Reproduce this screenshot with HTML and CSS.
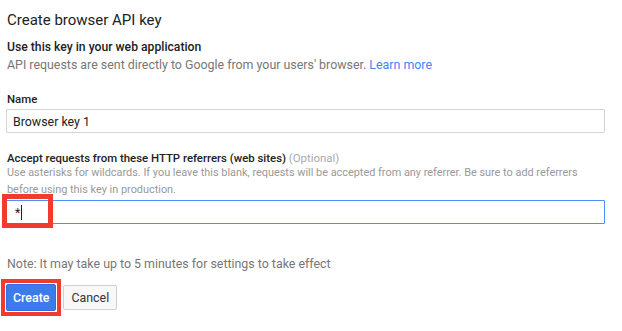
FILE: index.html
```html
<!DOCTYPE html>
<html lang="en">
<head>
    <meta charset="UTF-8">
    <meta name="viewport" content="width=device-width, initial-scale=1.0">
    <title>Create browser API key</title>
    <link rel="stylesheet" href="styles.css">
</head>
<body>
    <div class="dialog">
        <h1 class="dialog-title">Create browser API key</h1>

        <div class="intro">
            <h2 class="intro-title">Use this key in your web application</h2>
            <p class="intro-text">API requests are sent directly to Google from your users' browser. <a href="#" class="link">Learn more</a></p>
        </div>

        <div class="form-group">
            <label for="key-name">Name</label>
            <input type="text" id="key-name" class="field" value="Browser key 1">
        </div>

        <div class="form-group referrers">
            <label for="referrers">Accept requests from these HTTP referrers (web sites) <span class="optional">(Optional)</span></label>
            <p class="help">Use asterisks for wildcards. If you leave this blank, requests will be accepted from any referrer. Be sure to add referrers before using this key in production.</p>
            <div class="field-wrap">
                <div class="field field-focus"><span class="field-value">*</span><span class="caret"></span></div>
                <!-- annotation box over the start of the field -->
                <div class="marker"></div>
            </div>
        </div>

        <p class="note">Note: It may take up to 5 minutes for settings to take effect</p>

        <div class="actions">
            <div class="marked">
                <button class="btn btn-primary">Create</button>
            </div>
            <button class="btn">Cancel</button>
        </div>
    </div>
</body>
</html>
```

FILE: styles.css
```css
* {
    box-sizing: border-box;
}
body {
    margin: 0;
    font-family: Roboto, 'Liberation Sans', Arial, sans-serif;
    background-color: #fff;
    color: #222;
}
.dialog {
    width: 622px;
    padding: 10px 16px 0 7px;
    display: flex;
    flex-direction: column;
}
.dialog-title {
    margin: 0 0 8px;
    font-size: 15px;
    line-height: 20px;
    font-weight: 400;
    color: #222;
}
.intro-title {
    margin: 0;
    font-size: 12.2px;
    line-height: 18px;
    font-weight: 500;
    color: #222;
}
.intro-text {
    margin: 0;
    font-size: 12.4px;
    line-height: 18px;
    color: #777;
}
.link {
    color: #4285f4;
    text-decoration: none;
}
.form-group {
    display: flex;
    flex-direction: column;
    margin-top: 17px;
}
label {
    font-size: 11.4px;
    line-height: 16px;
    font-weight: 500;
    color: #222;
}
.optional {
    font-weight: 400;
    color: #aaa;
}
.field {
    display: flex;
    align-items: center;
    width: 100%;
    height: 24px;
    margin: 2px 0 0 -1px;
    padding: 0 6px;
    border: 1px solid #d4d4d4;
    border-radius: 1px;
    font-family: Roboto, 'Liberation Sans', Arial, sans-serif;
    font-size: 12.4px;
    color: #222;
    outline: none;
}
.referrers {
    margin-top: 18px;
}
.referrers label {
    line-height: 14px;
}
.help {
    margin: 0;
    font-size: 10.9px;
    line-height: 16.5px;
    color: #999;
}
.field-wrap {
    position: relative;
}
.field-focus {
    margin-top: 2px;
    border-color: #4d90fe;
}
.field-value {
    padding-left: 2px;
}
.caret {
    width: 1px;
    height: 15px;
    margin-left: 1px;
    background-color: #222;
}
.marker {
    position: absolute;
    left: -5px;
    top: -4px;
    width: 51px;
    height: 34px;
    border: 5px solid #f23b2f;
}
.note {
    margin: 31px 0 0;
    font-size: 12.4px;
    line-height: 18px;
    color: #777;
}
.actions {
    display: flex;
    align-items: center;
    gap: 2px;
    margin-top: 6px;
    margin-left: -6px;
}
.marked {
    padding: 1px;
    border: 4px solid #f23b2f;
    background-color: #fff;
}
.btn {
    height: 25px;
    padding: 0 7px;
    border: 1px solid #d0d0d0;
    border-radius: 2px;
    background-color: #f8f8f8;
    font-family: Roboto, 'Liberation Sans', Arial, sans-serif;
    font-size: 12.4px;
    color: #333;
    cursor: pointer;
}
.btn-primary {
    height: 27px;
    padding: 0 6px;
    border-color: #2f6de1;
    background-color: #3b7cea;
    color: #fff;
    font-weight: 500;
}
```
